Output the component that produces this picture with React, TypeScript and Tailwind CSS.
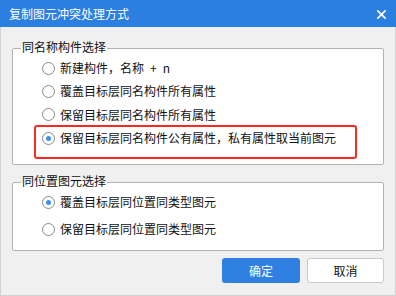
import React from "react";

const font = { fontFamily: '"Noto Sans CJK SC", "Noto Sans", sans-serif' };

function Radio({ checked }: { checked?: boolean }) {
  return (
    <span className="w-[13px] h-[13px] rounded-full border border-[#8a8a8a] bg-white flex items-center justify-center shrink-0">
      {checked && <span className="w-[5px] h-[5px] rounded-full bg-[#3d8ff2]" />}
    </span>
  );
}

function Row({ label, checked, children }: { label: string; checked?: boolean; children?: React.ReactNode }) {
  return (
    <div className="relative h-[20px] flex items-center pl-[21px] gap-[5px]">
      <Radio checked={checked} />
      <span className="text-[12px] leading-[20px] text-[#111] whitespace-pre">{label}</span>
      {children}
    </div>
  );
}

export default function App() {
  return (
    <div className="w-[396px] h-[296px] flex flex-col bg-[#f0f0f0] overflow-hidden" style={font}>
      <div className="h-[27px] shrink-0 bg-[#2b7fe0] flex items-center justify-between pl-[9px] pr-[10px]">
        <span className="text-white text-[12px] leading-[14px]">复制图元冲突处理方式</span>
        <svg width="9" height="9" viewBox="0 0 9 9" className="mt-[1px]">
          <path d="M0.8 0.8 L8.2 8.2 M8.2 0.8 L0.8 8.2" stroke="#ffffff" strokeWidth="1.7" strokeLinecap="square" />
        </svg>
      </div>
      <div className="flex-1 flex flex-col px-[11px] border-x border-b border-[#d2d2d2]">
        <fieldset className="mt-[12px] bg-white border border-[#b2b2b2] rounded-[2px] pl-[8px] pr-[8px] pb-[16px]">
          <legend className="px-[1px] pb-[4px] text-[12px] leading-[15px] text-[#111]">同名称构件选择</legend>
          <div className="flex flex-col gap-[3.4px]">
            <Row label={"新建构件，名称\u2002+\u2002n"} />
            <Row label="覆盖目标层同名构件所有属性" />
            <Row label="保留目标层同名构件所有属性" />
            <Row label="保留目标层同名构件公有属性，私有属性取当前图元" checked>
              <span className="absolute left-[13px] top-[-3px] w-[323px] h-[34px] border-2 border-[#ff2a1f] rounded-[3px]" />
            </Row>
          </div>
        </fieldset>
        <fieldset className="mt-[8px] bg-white border border-[#b2b2b2] rounded-[2px] pl-[8px] pr-[8px] pb-[11px]">
          <legend className="px-[1px] pb-[4px] text-[12px] leading-[15px] text-[#111]">同位置图元选择</legend>
          <div className="flex flex-col gap-[7px]">
            <Row label="覆盖目标层同位置同类型图元" checked />
            <Row label="保留目标层同位置同类型图元" />
          </div>
        </fieldset>
        <div className="mt-[7px] flex justify-end gap-[7px]">
          <button className="w-[78px] h-[25px] rounded-[3px] bg-[#2f80e1] text-white text-[12px] leading-[25px]">确定</button>
          <button className="w-[77px] h-[25px] rounded-[3px] bg-white border border-[#c9c9c9] text-[#111] text-[12px] leading-[23px]">取消</button>
        </div>
      </div>
    </div>
  );
}
